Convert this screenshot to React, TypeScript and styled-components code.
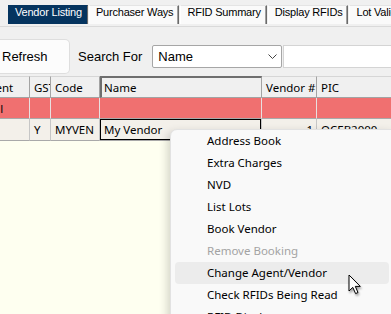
import * as React from 'react';
import styled, { createGlobalStyle, css } from 'styled-components';

const GlobalStyle = createGlobalStyle`
    html, body {
        margin: 0;
        padding: 0;
        background: #f0f0f0;
        overflow: hidden;
    }
    #root {
        width: 391px;
        height: 314px;
        position: relative;
        overflow: hidden;
    }
`;

const Screen = styled.div`
    display: flex;
    flex-direction: column;
    height: 314px;
    background: #f0f0f0;
`;

const TabStrip = styled.div`
    display: flex;
    align-items: flex-start;
    gap: 1px;
    height: 27px;
    box-sizing: border-box;
    padding: 5px 0 0 8px;
    border-bottom: 1px solid #dadada;
    white-space: nowrap;
    overflow: hidden;
`;

interface TabProps {
    $active?: boolean;
}
const Tab = styled.div<TabProps>`
    flex: none;
    height: 19px;
    line-height: 18px;
    box-sizing: border-box;
    padding: 0 5px 0 6px;
    font: 11px 'Liberation Sans', Arial, sans-serif;
    letter-spacing: -0.2px;
    border-top: 1px solid #e4e4e4;
    border-left: 1px solid #ffffff;
    border-right: 1px solid #6a6a6a;
    box-shadow: inset -1px 0 0 #a0a0a0;
    background: #fafafa;
    color: #000;
    ${(p) =>
        p.$active &&
        css`
            background: #05345f;
            color: #fff;
            border-top-color: #05345f;
            border-left-color: #05345f;
            box-shadow: none;
        `}
`;

const Toolbar = styled.div`
    display: flex;
    align-items: center;
    height: 49px;
    box-sizing: border-box;
    padding-top: 10px;
`;

const RefreshButton = styled.div`
    width: 70px;
    height: 35px;
    box-sizing: border-box;
    display: flex;
    align-items: center;
    padding-left: 2px;
    background: #fcfcfc;
    border: 1px solid #dedede;
    border-left: none;
    border-radius: 0 5px 5px 0;
    font: 13px 'Liberation Sans', Arial, sans-serif;
    color: #000;
`;

const SearchLabel = styled.span`
    margin-left: 8px;
    font: 13px 'Liberation Sans', Arial, sans-serif;
    color: #000;
`;

const Select = styled.div`
    margin-left: 10px;
    width: 130px;
    height: 23px;
    box-sizing: border-box;
    display: flex;
    align-items: center;
    justify-content: space-between;
    padding: 0 4px 0 5px;
    background: #fff;
    border: 1px solid #a6a6a6;
    border-radius: 2px;
    font: 13px 'Liberation Sans', Arial, sans-serif;
    color: #000;
`;

const SearchInput = styled.div`
    flex: 1;
    margin-left: 1px;
    height: 23px;
    box-sizing: border-box;
    background: #fff;
    border: 1px solid #d4d4d4;
    border-right: none;
`;

const GridArea = styled.div`
    flex: 1;
    overflow: hidden;
    background: #fefff0;
`;

const Grid = styled.div<{ $scroll: number }>`
    display: grid;
    grid-template-columns: 53px 21px 49px 162px 55px 110px;
    margin-left: ${(p) => -p.$scroll}px;
    font: 11.5px 'Segoe UI', 'Noto Sans', sans-serif;
    color: #000;
`;

type Kind = 'head' | 'total' | 'data';

interface CellProps {
    $kind: Kind;
    $right?: boolean;
    $focus?: boolean;
    $sorted?: boolean;
}
const Cell = styled.div<CellProps>`
    box-sizing: border-box;
    display: flex;
    align-items: center;
    justify-content: ${(p) => (p.$right ? 'flex-end' : 'flex-start')};
    padding: 0 3px 0 4px;
    white-space: nowrap;
    overflow: hidden;
    ${(p) =>
        p.$kind === 'head' &&
        css`
            height: 22px;
            background: #f0f0f0;
            border-top: 1px solid #d6d6d6;
            border-right: 1px solid #a3a3a3;
            border-bottom: 1px solid #a3a3a3;
        `}
    ${(p) =>
        p.$kind === 'total' &&
        css`
            height: 21px;
            padding-left: 0;
            background: #f07070;
            border-right: 1px solid #e8e0e0;
            border-bottom: 1px solid #a9a9a9;
        `}
    ${(p) =>
        p.$kind === 'data' &&
        css`
            height: 22px;
            background: #f3f0ea;
            border-right: 1px solid #c6c6c6;
            border-bottom: 1px solid #a9a9a9;
        `}
    ${(p) =>
        p.$sorted &&
        css`
            border-top: 2px solid #6e6e6e;
            border-left: 2px solid #6e6e6e;
            padding-left: 2px;
        `}
    ${(p) =>
        p.$focus &&
        css`
            box-shadow: inset 0 0 0 1px #000;
        `}
`;

const Menu = styled.div`
    position: absolute;
    left: 170px;
    top: 129px;
    width: 224px;
    box-sizing: border-box;
    padding: 0 4px 6px;
    background: #f9f9f9;
    border: 1px solid #e2e2e2;
    border-radius: 7px 0 0 0;
    box-shadow: -3px 3px 9px rgba(0, 0, 0, 0.16);
    font: 11.5px 'Segoe UI', 'Noto Sans', sans-serif;
`;

interface ItemProps {
    $hover?: boolean;
    $disabled?: boolean;
}
const MenuItem = styled.div<ItemProps>`
    height: 22px;
    line-height: 22px;
    padding-left: 32px;
    border-radius: 4px;
    white-space: nowrap;
    color: ${(p) => (p.$disabled ? '#a3a3a3' : '#000')};
    background: ${(p) => (p.$hover ? '#ececec' : 'transparent')};
`;

const Pointer = styled.svg`
    position: absolute;
    left: 348px;
    top: 274px;
    filter: drop-shadow(1px 2px 1px rgba(0, 0, 0, 0.35));
`;

const columns = ['Agent', 'GST', 'Code', 'Name', 'Vendor #', 'PIC'];
const totals = ['Total', '', '', '', '', ''];
const row = ['', 'Y', 'MYVEN', 'My Vendor', '1', 'OCEB2000'];

const menuItems: { label: string; disabled?: boolean; hover?: boolean }[] = [
    { label: 'Address Book' },
    { label: 'Extra Charges' },
    { label: 'NVD' },
    { label: 'List Lots' },
    { label: 'Book Vendor' },
    { label: 'Remove Booking', disabled: true },
    { label: 'Change Agent/Vendor', hover: true },
    { label: 'Check RFIDs Being Read' },
    { label: 'RFID Display' },
];

const tabs = ['Vendor Listing', 'Purchaser Ways', 'RFID Summary', 'Display RFIDs', 'Lot Validation'];

const App: React.FC = () => {
    return (
        <>
            <GlobalStyle />
            <Screen>
                <TabStrip>
                    {tabs.map((t, i) => (
                        <Tab key={t} $active={i === 0}>
                            {t}
                        </Tab>
                    ))}
                </TabStrip>
                <Toolbar>
                    <RefreshButton>Refresh</RefreshButton>
                    <SearchLabel>Search For</SearchLabel>
                    <Select>
                        <span>Name</span>
                        <svg width="9" height="5" viewBox="0 0 9 5">
                            <path d="M0.5 0.5 L4.5 4.5 L8.5 0.5" fill="none" stroke="#444" strokeWidth="1" />
                        </svg>
                    </Select>
                    <SearchInput />
                </Toolbar>
                <GridArea>
                    <Grid $scroll={23}>
                        {columns.map((c, i) => (
                            <Cell key={c} $kind="head" $sorted={i === 3}>
                                {c}
                            </Cell>
                        ))}
                        {totals.map((c, i) => (
                            <Cell key={'t' + i} $kind="total">
                                {c}
                            </Cell>
                        ))}
                        {row.map((c, i) => (
                            <Cell key={'r' + i} $kind="data" $right={i === 4} $focus={i === 3}>
                                {c}
                            </Cell>
                        ))}
                    </Grid>
                </GridArea>
            </Screen>
            <Menu>
                {menuItems.map((m) => (
                    <MenuItem key={m.label} $hover={m.hover} $disabled={m.disabled}>
                        {m.label}
                    </MenuItem>
                ))}
            </Menu>
            <Pointer width="14" height="22" viewBox="0 0 14 22">
                <path
                    d="M1 1 L1 17 L4.8 13.4 L7.6 19.6 L10 18.5 L7.3 12.4 L12.3 12.4 Z"
                    fill="#fff"
                    stroke="#000"
                    strokeWidth="1"
                    strokeLinejoin="round"
                />
            </Pointer>
        </>
    );
};

export default App;
